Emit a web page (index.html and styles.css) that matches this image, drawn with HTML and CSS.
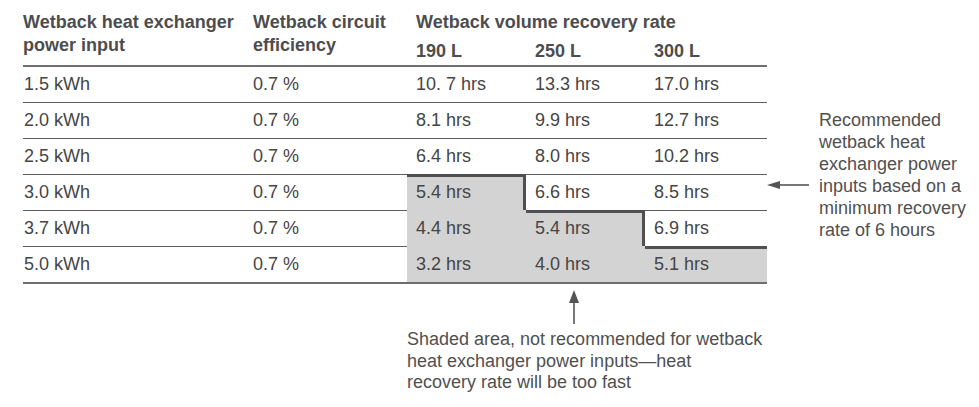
FILE: index.html
```html
<!DOCTYPE html>
<html lang="en">
<head>
<meta charset="utf-8">
<title>Wetback recovery rate</title>
<link rel="stylesheet" href="styles.css">
</head>
<body>
<div class="page">
  <div class="top">
    <table class="rates">
      <colgroup>
        <col class="c1"><col class="c2"><col class="c3"><col class="c4"><col class="c5">
      </colgroup>
      <thead>
        <tr>
          <th rowspan="2" class="h-lead">Wetback heat exchanger<br>power input</th>
          <th rowspan="2" class="h-lead h2">Wetback circuit<br>efficiency</th>
          <th colspan="3" class="h-group">Wetback volume recovery rate</th>
        </tr>
        <tr>
          <th class="h-vol">190 L</th>
          <th class="h-vol">250 L</th>
          <th class="h-vol">300 L</th>
        </tr>
      </thead>
      <tbody>
        <tr><td class="k">1.5 kWh</td><td class="e">0.7 %</td><td>10. 7 hrs</td><td>13.3 hrs</td><td>17.0 hrs</td></tr>
        <tr><td class="k">2.0 kWh</td><td class="e">0.7 %</td><td>8.1 hrs</td><td>9.9 hrs</td><td>12.7 hrs</td></tr>
        <tr><td class="k">2.5 kWh</td><td class="e">0.7 %</td><td class="above">6.4 hrs</td><td>8.0 hrs</td><td>10.2 hrs</td></tr>
        <tr><td class="k">3.0 kWh</td><td class="e">0.7 %</td><td class="s st sr">5.4 hrs</td><td class="above">6.6 hrs</td><td>8.5 hrs</td></tr>
        <tr><td class="k">3.7 kWh</td><td class="e">0.7 %</td><td class="s">4.4 hrs</td><td class="s st sr">5.4 hrs</td><td class="above">6.9 hrs</td></tr>
        <tr class="last"><td class="k">5.0 kWh</td><td class="e">0.7 %</td><td class="s">3.2 hrs</td><td class="s">4.0 hrs</td><td class="s st">5.1 hrs</td></tr>
      </tbody>
    </table>
    <div class="side">
      <svg class="arrow-left" width="42" height="10" viewBox="0 0 42 10" aria-hidden="true">
        <line x1="10" y1="5" x2="42" y2="5" stroke="#555" stroke-width="1.6"/>
        <polygon points="0,5 13,1 13,9" fill="#555"/>
      </svg>
      <p class="note-right">Recommended wetback heat exchanger power inputs based on a minimum recovery rate of 6 hours</p>
    </div>
  </div>
  <div class="bottom">
    <svg class="arrow-up" width="12" height="34" viewBox="0 0 12 34" aria-hidden="true">
      <line x1="6" y1="10" x2="6" y2="34" stroke="#555" stroke-width="1.6"/>
      <polygon points="6,0 1,13 11,13" fill="#555"/>
    </svg>
    <p class="note-bottom">Shaded area, not recommended for wetback heat exchanger power inputs—heat recovery rate will be too fast</p>
  </div>
</div>
</body>
</html>
```

FILE: styles.css
```css
html, body {
  margin: 0;
  padding: 0;
  background: #ffffff;
}

body {
  font-family: "Liberation Sans", Arial, sans-serif;
  color: #454545;
}

.page {
  padding: 11px 0 0 23px;
}

.top {
  display: flex;
  align-items: flex-start;
}

.rates {
  border-collapse: separate;
  border-spacing: 0;
  table-layout: fixed;
  width: 744px;
  flex: none;
}

.c1 { width: 230px; }
.c2 { width: 154px; }
.c3 { width: 119px; }
.c4 { width: 119px; }
.c5 { width: 122px; }

.rates th {
  font-size: 18px;
  font-weight: bold;
  color: #4d4d4f;
  text-align: left;
  line-height: 23px;
  padding: 0;
}

.h-lead {
  vertical-align: top;
  padding-left: 1px;
  border-bottom: 2px solid #707070;
}

.rates th.h2 {
  padding-left: 0;
}

.rates th.h-group {
  padding-left: 9px;
  height: 23px;
}

.rates th.h-vol {
  padding: 6px 0 2px 9px;
  border-bottom: 2px solid #707070;
}

.rates td {
  font-size: 18px;
  height: 35px;
  padding: 0 0 0 9px;
  vertical-align: middle;
  border-bottom: 1px solid #5e5e5e;
  white-space: nowrap;
}

.rates td.k { padding-left: 1px; }
.rates td.e { padding-left: 0; }

.rates td.s {
  background: #d3d3d3;
  border-bottom-color: #d3d3d3;
}

.rates td.above {
  border-bottom-color: #505050;
}

.rates td.st {
  box-shadow: inset 0 2px 0 #505050;
}

.rates td.sr {
  box-shadow: inset 0 2px 0 #505050, inset -3px 0 0 #505050;
}

.rates tr.last td {
  border-bottom: 2px solid #6e6e6e;
}

.side {
  display: flex;
  align-items: flex-start;
  margin-top: 98px;
}

.arrow-left {
  display: block;
  flex: none;
  margin-top: 71px;
  margin-right: 10px;
}

.note-right {
  margin: 0;
  width: 160px;
  font-size: 18px;
  line-height: 22px;
  color: #505050;
}

.bottom {
  margin-left: 384px;
  margin-top: 6px;
  width: 356.5px;
}

.arrow-up {
  display: block;
  margin-left: 161px;
}

.note-bottom {
  margin: 5px 0 0;
  font-size: 18px;
  line-height: 21.5px;
  color: #505050;
}
```
